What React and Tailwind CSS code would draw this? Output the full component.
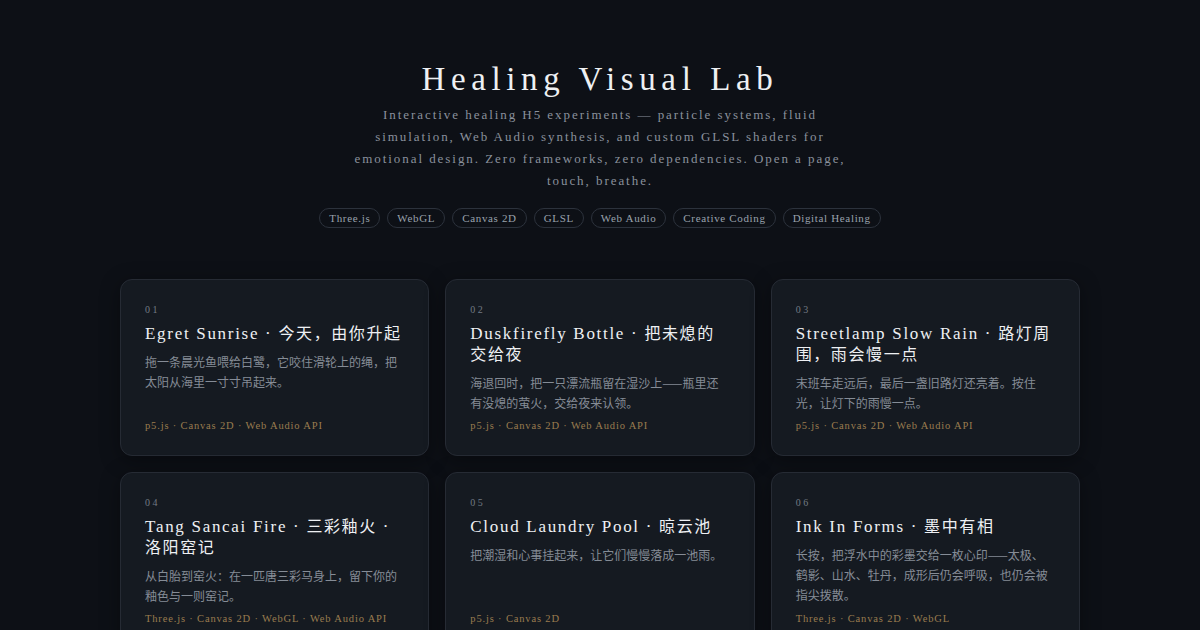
import React from "react";

const serif = { fontFamily: '"Liberation Serif", "Noto Sans CJK SC", serif' };
const cjk = { fontFamily: '"Noto Sans CJK SC", "Liberation Sans", sans-serif' };

const tags = ["Three.js", "WebGL", "Canvas 2D", "GLSL", "Web Audio", "Creative Coding", "Digital Healing"];

const cards = [
  { n: "01", t: "Egret Sunrise · 今天，由你升起", d: "拖一条晨光鱼喂给白鹭，它咬住滑轮上的绳，把太阳从海里一寸寸吊起来。", s: "p5.js · Canvas 2D · Web Audio API" },
  { n: "02", t: "Duskfirefly Bottle · 把未熄的交给夜", d: "海退回时，把一只漂流瓶留在湿沙上——瓶里还有没熄的萤火，交给夜来认领。", s: "p5.js · Canvas 2D · Web Audio API" },
  { n: "03", t: "Streetlamp Slow Rain · 路灯周围，雨会慢一点", d: "末班车走远后，最后一盏旧路灯还亮着。按住光，让灯下的雨慢一点。", s: "p5.js · Canvas 2D · Web Audio API" },
  { n: "04", t: "Tang Sancai Fire · 三彩釉火 · 洛阳窑记", d: "从白胎到窑火：在一匹唐三彩马身上，留下你的釉色与一则窑记。", s: "Three.js · Canvas 2D · WebGL · Web Audio API" },
  { n: "05", t: "Cloud Laundry Pool · 晾云池", d: "把潮湿和心事挂起来，让它们慢慢落成一池雨。", s: "p5.js · Canvas 2D" },
  { n: "06", t: "Ink In Forms · 墨中有相", d: "长按，把浮水中的彩墨交给一枚心印——太极、鹤影、山水、牡丹，成形后仍会呼吸，也仍会被指尖拨散。", s: "Three.js · Canvas 2D · WebGL" },
];

function Title({ text }) {
  const parts = text.split(/([\u3000-\u9fff\uff00-\uffef]+)/).filter(Boolean);
  return (
    <>
      {parts.map((p, i) =>
        /[\u3000-\u9fff\uff00-\uffef]/.test(p) ? (
          <span key={i} className="text-[16px] leading-[16px] tracking-[1.6px]" style={cjk}>
            {p}
          </span>
        ) : (
          <span key={i}>{p}</span>
        )
      )}
    </>
  );
}

export default function App() {
  return (
    <div className="min-h-screen w-full bg-[#0d1016] overflow-hidden" style={serif}>
      <div className="mx-auto w-[960px] pt-[59px]">
        <header className="flex flex-col items-center text-center">
          <h1 className="text-[33px] leading-[40px] tracking-[0.17em] text-[#eef0f3] font-normal">
            Healing Visual Lab
          </h1>
          <p className="mt-[5px] w-[500px] text-[13px] leading-[22px] tracking-[0.15em] text-[#8a919c]">
            Interactive healing H5 experiments — particle systems, fluid simulation, Web Audio synthesis, and custom GLSL shaders for emotional design. Zero frameworks, zero dependencies. Open a page, touch, breathe.
          </p>
          <div className="mt-4 flex flex-wrap justify-center gap-[7px]">
            {tags.map((t) => (
              <span
                key={t}
                className="h-5 px-[9px] flex items-center rounded-full border border-[#2c323c] text-[11px] tracking-[0.06em] text-[#9aa2ad]"
              >
                {t}
              </span>
            ))}
          </div>
        </header>

        <main className="mt-[51px] grid grid-cols-3 gap-4">
          {cards.map((c) => (
            <div
              key={c.n}
              className="flex flex-col rounded-xl border border-[#262b34] bg-[#151a21] px-6 pt-6 pb-[23px] shadow-[0_4px_20px_rgba(0,0,0,0.35)]"
            >
              <div className="text-[10px] leading-[12px] tracking-[0.25em] text-[#737a84]">{c.n}</div>
              <h2 className="mt-[7px] text-[17px] leading-[21px] tracking-[1.7px] text-[#eef0f3] font-normal">
                <Title text={c.t} />
              </h2>
              <p className="mt-2 text-[12px] leading-[20px] text-[#858c96]" style={cjk}>
                {c.d}
              </p>
              <div className="mt-auto pt-[7px] text-[10.5px] leading-[12px] tracking-[0.08em] text-[#9a7c4f]">
                {c.s}
              </div>
            </div>
          ))}
        </main>
      </div>
    </div>
  );
}
